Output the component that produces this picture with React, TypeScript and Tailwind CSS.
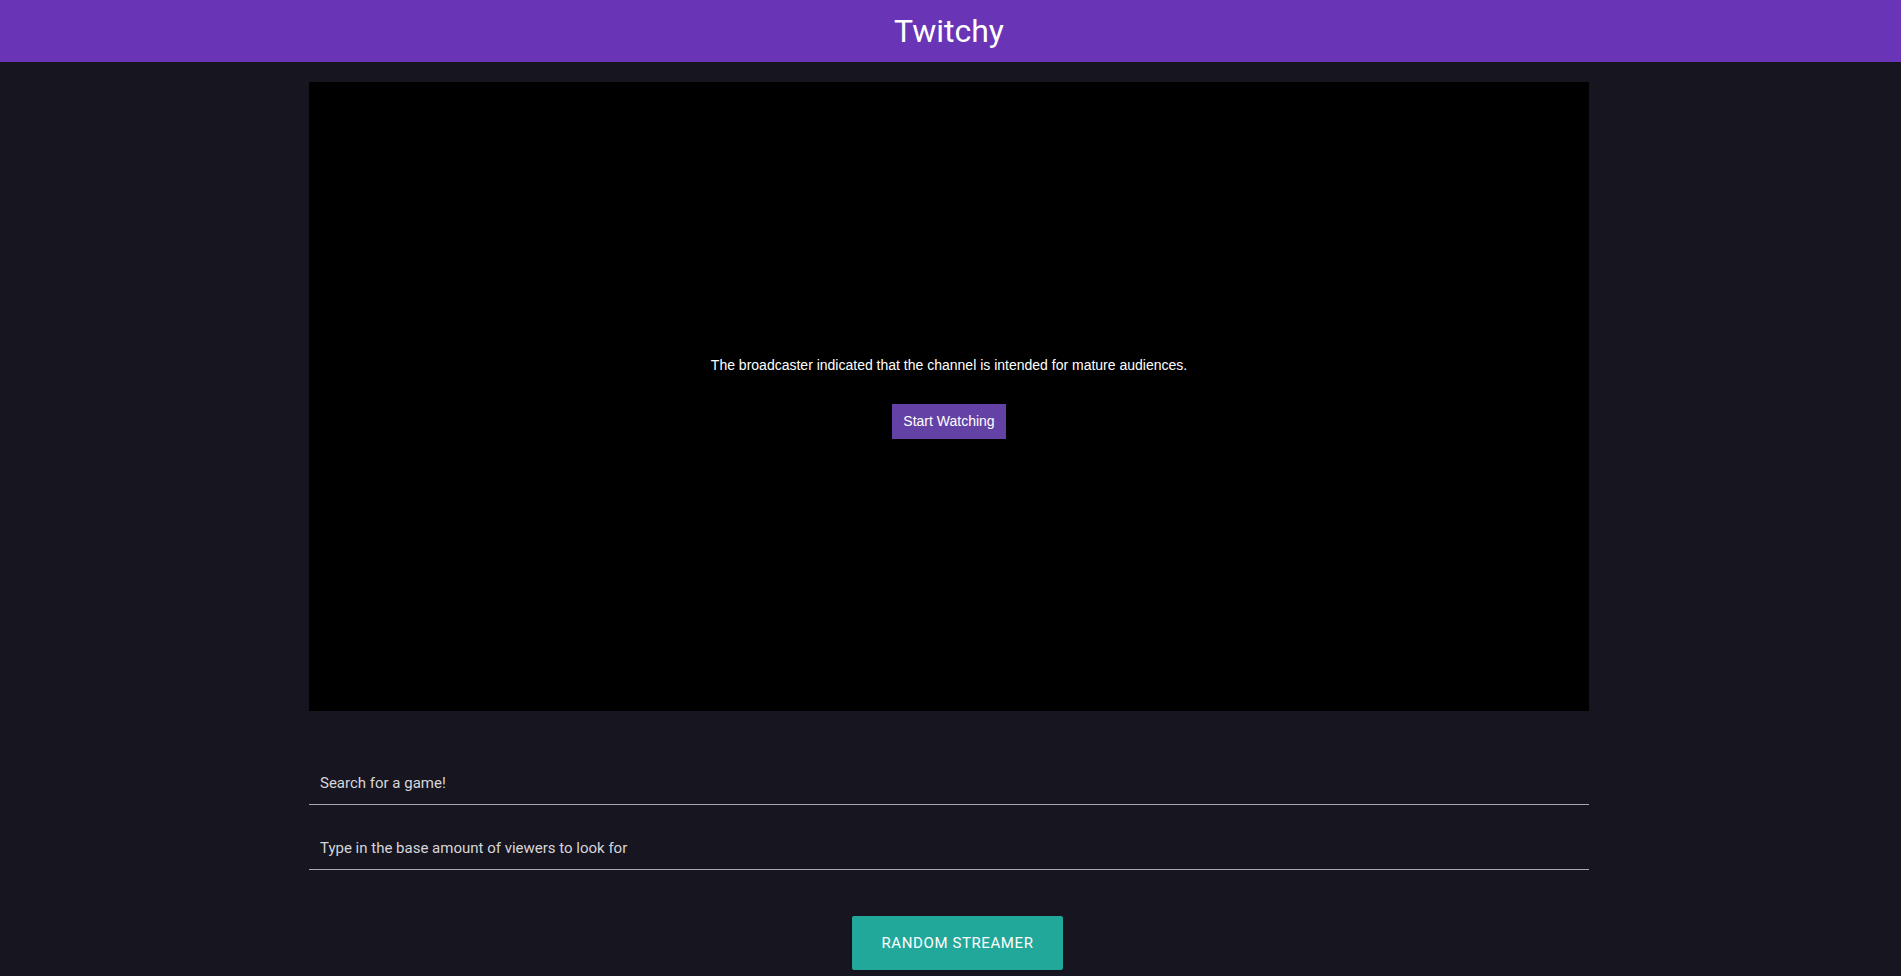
import React from "react";

export default function App() {
  return (
    <div className="min-h-screen bg-[#17151f] font-['Roboto',_'Liberation_Sans',_sans-serif]">
      {/* Top bar */}
      <header className="h-[62px] bg-[#6934b5] flex items-center justify-center pr-[3px]">
        <h1 className="text-[32px] text-white font-normal leading-none">Twitchy</h1>
      </header>

      <div className="pr-[3px]">
        <main className="w-[1280px] mx-auto pt-[20px] flex flex-col">
          {/* Embedded player */}
          <div className="h-[629px] bg-black flex flex-col items-center justify-center font-['Liberation_Sans',_Arial,_sans-serif]">
            <p className="text-[14px] leading-[16px] text-white mt-[2px] mb-[31px]">
              The broadcaster indicated that the channel is intended for mature audiences.
            </p>
            <button className="w-[114px] h-[35px] bg-[#6441a5] text-white text-[14px]">
              Start Watching
            </button>
          </div>

          {/* Search fields */}
          <div className="mt-[50px] flex flex-col gap-[21px]">
            <input
              type="text"
              placeholder="Search for a game!"
              className="h-[44px] pl-[11px] bg-transparent border-b border-[#a9a9b0] text-[15px] text-[#d6d6da] placeholder:text-[#d6d6da] outline-none"
            />
            <input
              type="text"
              placeholder="Type in the base amount of viewers to look for"
              className="h-[44px] pl-[11px] bg-transparent border-b border-[#a9a9b0] text-[15px] text-[#d6d6da] placeholder:text-[#d6d6da] outline-none"
            />
          </div>

          <div className="mt-[46px] flex justify-center pl-[17px]">
            <button className="w-[211px] h-[54px] rounded-[2px] bg-[#21a89a] text-white text-[15px] font-normal uppercase tracking-[0.6px] shadow-sm">
              Random Streamer
            </button>
          </div>
        </main>
      </div>
    </div>
  );
}
